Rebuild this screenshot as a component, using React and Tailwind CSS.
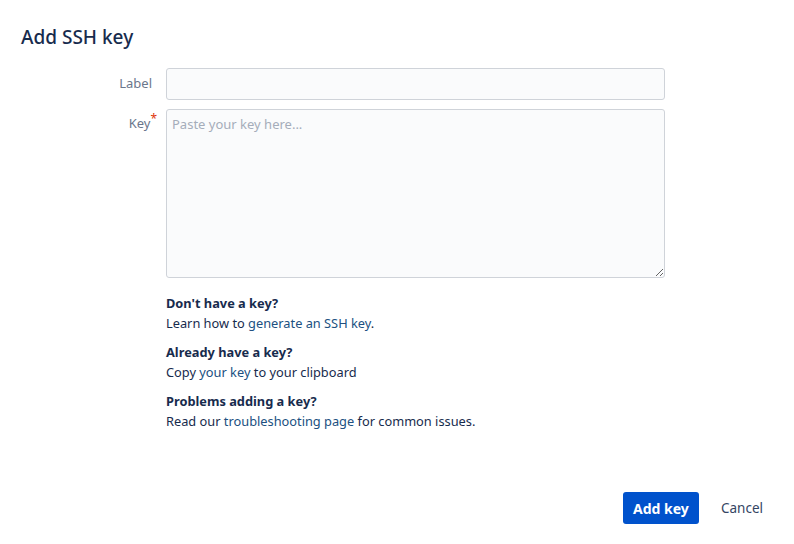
export default function App() {
    return (
        <div className="w-[794px] h-[544px] bg-white text-[#172B4D] flex flex-col" style={{ fontFamily: '"Noto Sans", "Open Sans", sans-serif' }}>
            {/* Title */}
            <h1 className="pl-[21px] pt-[25px] text-[19px] leading-[24px] font-medium text-[#172B4D]">Add SSH key</h1>

            {/* Form */}
            <div className="mt-[19px] flex flex-col gap-[9px]">
                <div className="flex items-center">
                    <label className="w-[152px] text-right text-[13px] text-[#6B778C]">Label</label>
                    <input
                        type="text"
                        className="ml-[14px] w-[499px] h-[32px] rounded-[3px] border border-[#CFD3D9] bg-[#FAFBFC] px-2 text-[13px] outline-none"
                    />
                </div>
                <div className="flex items-start">
                    <label className="w-[157px] text-right text-[13px] text-[#6B778C] pt-[4px] leading-[20px]">
                        Key<span className="relative -top-[5px] text-[#DE350B] text-[12px]">*</span>
                    </label>
                    <textarea
                        placeholder="Paste your key here..."
                        className="ml-[9px] w-[499px] h-[169px] rounded-[3px] border border-[#CFD3D9] bg-[#FAFBFC] px-[5px] py-[4px] text-[13px] leading-[20px] placeholder:text-[#A5ADBA] outline-none"
                    />
                </div>
            </div>

            {/* Help */}
            <div className="ml-[166px] mt-[15px] flex flex-col gap-[9px] text-[12.8px] leading-[20px] text-[#172B4D]">
                <div>
                    <p className="font-bold">Don't have a key?</p>
                    <p>Learn how to <a className="text-[#205081]">generate an SSH key</a>.</p>
                </div>
                <div>
                    <p className="font-bold">Already have a key?</p>
                    <p>Copy <a className="text-[#205081]">your key</a> to your clipboard</p>
                </div>
                <div>
                    <p className="font-bold">Problems adding a key?</p>
                    <p>Read our <a className="text-[#205081]">troubleshooting page</a> for common issues.</p>
                </div>
            </div>

            {/* Actions */}
            <div className="mt-auto mb-[20px] flex items-center justify-end pr-[21px] gap-[12px]">
                <button className="h-[32px] w-[76px] rounded-[3px] bg-[#0052CC] text-white text-[14px] font-bold">Add key</button>
                <button className="h-[32px] px-[10px] text-[13.5px] text-[#344563]">Cancel</button>
            </div>
        </div>
    );
}
